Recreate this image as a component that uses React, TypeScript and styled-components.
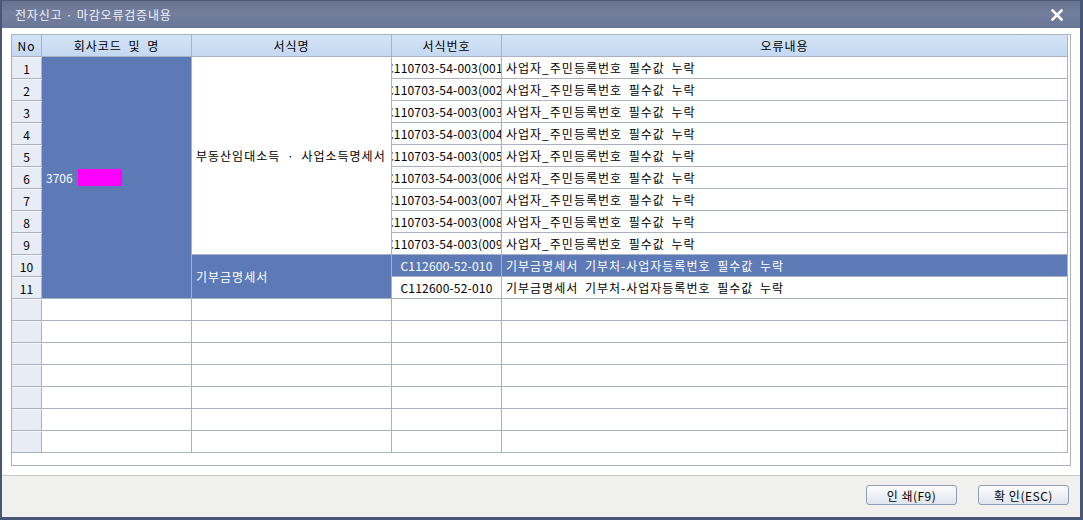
import React from 'react';
import styled, { createGlobalStyle } from 'styled-components';

const GlobalStyle = createGlobalStyle`
  html, body {
    margin: 0;
    padding: 0;
    background: #ffffff;
  }
  body {
    font-family: "Noto Sans CJK KR", "Noto Sans", sans-serif;
    font-size: 12px;
    color: #000000;
  }
  * {
    box-sizing: border-box;
  }
`;

const GRID_LINE = '#a9b1c2';
const SELECTED = '#5d7ab6';

const Window = styled.div`
  width: 1083px;
  height: 520px;
  display: flex;
  flex-direction: column;
  background: #ffffff;
  border-left: 2px solid #4a5675;
  border-right: 3px solid #4a5675;
  border-bottom: 3px solid #4a5675;
`;

const TitleBar = styled.div`
  height: 28px;
  flex-shrink: 0;
  display: flex;
  align-items: center;
  justify-content: space-between;
  padding: 0 16px 0 13px;
  border-top: 1px solid #4f5a78;
  background: linear-gradient(to bottom, #65718f 0%, #737f9d 45%, #6a7696 100%);
  color: #eef1f7;
  font-size: 12px;
  letter-spacing: 0.8px;
`;

const CloseButton = styled.span`
  display: flex;
  width: 14px;
  height: 14px;
  align-items: center;
  justify-content: center;
  margin-top: 1px;
`;

const Body = styled.div`
  flex: 1;
  display: flex;
  padding: 6px 9px 9px 9px;
`;

const TableBox = styled.div`
  flex: 1;
  border: 1px solid ${GRID_LINE};
  background: #ffffff;
  overflow: hidden;
`;

const Grid = styled.div`
  display: grid;
  grid-template-columns: 30px 150px 200px 110px 566px;
  grid-auto-rows: 22px;
`;

const HeaderCell = styled.div`
  display: flex;
  align-items: center;
  justify-content: center;
  border-right: 1px solid ${GRID_LINE};
  border-bottom: 1px solid ${GRID_LINE};
  background: linear-gradient(to bottom, #d4e3f6 0%, #c4d8f1 100%);
  white-space: nowrap;
  letter-spacing: 1px;
  word-spacing: 3px;
`;

const NoCell = styled.div`
  grid-column: 1;
  display: flex;
  align-items: center;
  justify-content: center;
  border-right: 1px solid ${GRID_LINE};
  border-bottom: 1px solid ${GRID_LINE};
  border-top: 1px solid #f6f8fb;
  background: #e8edf5;
`;

const Cell = styled.div<{
  $col: number;
  $span?: number;
  $selected?: boolean;
  $center?: boolean;
}>`
  grid-column: ${(p) => p.$col};
  grid-row: span ${(p) => p.$span ?? 1};
  display: flex;
  align-items: center;
  justify-content: ${(p) => (p.$center ? 'center' : 'flex-start')};
  padding: 0 ${(p) => (p.$center ? 0 : 4)}px;
  overflow: hidden;
  white-space: nowrap;
  letter-spacing: ${(p) => (p.$center ? 0.2 : 1)}px;
  word-spacing: 3px;
  border-right: 1px solid ${GRID_LINE};
  border-bottom: 1px solid ${GRID_LINE};
  background: ${(p) => (p.$selected ? SELECTED : '#ffffff')};
  color: ${(p) => (p.$selected ? '#ffffff' : '#000000')};
`;

const CompanyCode = styled.span`
  color: #ffffff;
  letter-spacing: 0;
`;

const MaskedName = styled.span`
  display: inline-block;
  width: 44px;
  height: 17px;
  margin-left: 5px;
  background: #ff00ff;
`;

const Footer = styled.div`
  height: 42px;
  flex-shrink: 0;
  display: flex;
  align-items: center;
  justify-content: flex-end;
  gap: 21px;
  padding: 0 11px 3px 0;
  border-top: 1px solid #c8c8c8;
  background: #f0f0ee;
`;

const Button = styled.button`
  width: 91px;
  height: 20px;
  padding: 0;
  font-family: "Noto Sans CJK KR", "Noto Sans", sans-serif;
  font-size: 12px;
  letter-spacing: 0.5px;
  color: #000000;
  border: 1px solid #8f9db6;
  border-radius: 3px;
  background: linear-gradient(to bottom, #fdfdfe 0%, #eef1f6 50%, #dfe5ee 100%);
  cursor: pointer;
`;

type Row = {
  code: string;
  message: string;
};

const incomeRows: Row[] = Array.from({ length: 9 }, (_, i) => ({
  code: `C110703-54-003(00${i + 1})`,
  message: '사업자_주민등록번호 필수값 누락',
}));

const donationRows: Row[] = [
  { code: 'C112600-52-010', message: '기부금명세서 기부처-사업자등록번호 필수값 누락' },
  { code: 'C112600-52-010', message: '기부금명세서 기부처-사업자등록번호 필수값 누락' },
];

const EMPTY_ROWS = 7;

const CloseIcon = () => (
  <svg width="12" height="12" viewBox="0 0 12 12">
    <path d="M1.5 1.5 L10.5 10.5 M10.5 1.5 L1.5 10.5" stroke="#ffffff" strokeWidth="2.6" strokeLinecap="square" />
  </svg>
);

const App: React.FC = () => {
  const selectedIndex = 9;
  const allRows = [...incomeRows, ...donationRows];

  return (
    <>
      <GlobalStyle />
      <Window>
        <TitleBar>
          <span>전자신고 · 마감오류검증내용</span>
          <CloseButton>
            <CloseIcon />
          </CloseButton>
        </TitleBar>

        <Body>
          <TableBox>
            <Grid>
              <HeaderCell>No</HeaderCell>
              <HeaderCell>회사코드 및 명</HeaderCell>
              <HeaderCell>서식명</HeaderCell>
              <HeaderCell>서식번호</HeaderCell>
              <HeaderCell>오류내용</HeaderCell>

              {allRows.map((row, i) => (
                <React.Fragment key={i}>
                  <NoCell>{i + 1}</NoCell>
                  {i === 0 && (
                    <Cell $col={2} $span={allRows.length} $selected>
                      <CompanyCode>3706</CompanyCode>
                      <MaskedName />
                    </Cell>
                  )}
                  {i === 0 && (
                    <Cell $col={3} $span={incomeRows.length}>
                      부동산임대소득 · 사업소득명세서
                    </Cell>
                  )}
                  {i === incomeRows.length && (
                    <Cell $col={3} $span={donationRows.length} $selected>
                      기부금명세서
                    </Cell>
                  )}
                  <Cell $col={4} $center $selected={i === selectedIndex}>
                    {row.code}
                  </Cell>
                  <Cell $col={5} $selected={i === selectedIndex}>
                    {row.message}
                  </Cell>
                </React.Fragment>
              ))}

              {Array.from({ length: EMPTY_ROWS }, (_, i) => (
                <React.Fragment key={`empty-${i}`}>
                  <NoCell />
                  <Cell $col={2} />
                  <Cell $col={3} />
                  <Cell $col={4} />
                  <Cell $col={5} />
                </React.Fragment>
              ))}
            </Grid>
          </TableBox>
        </Body>

        <Footer>
          <Button>인 쇄(F9)</Button>
          <Button>확 인(ESC)</Button>
        </Footer>
      </Window>
    </>
  );
};

export default App;
